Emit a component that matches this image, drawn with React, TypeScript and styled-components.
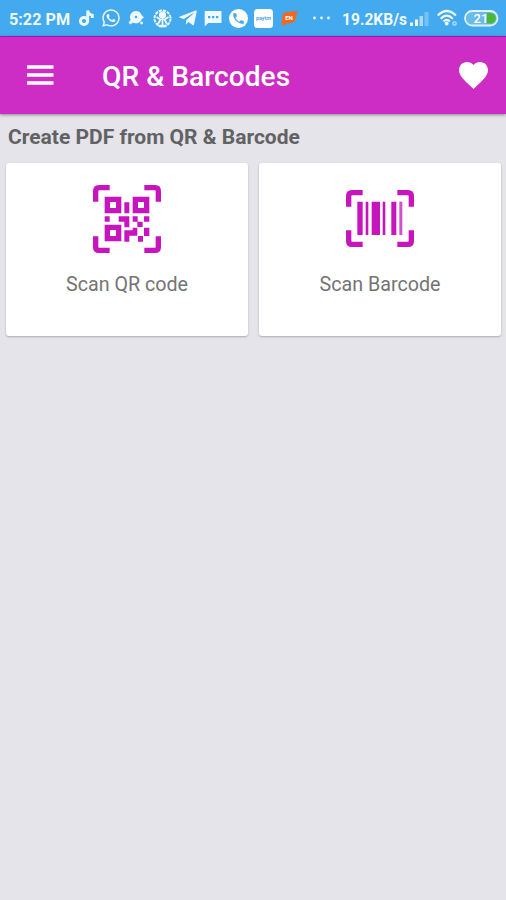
import React from "react";
import styled, { createGlobalStyle } from "styled-components";
import { FaWhatsapp, FaTelegramPlane } from "react-icons/fa";

const GlobalStyle = createGlobalStyle`
  * { box-sizing: border-box; }
  body { margin: 0; background: #e5e4ea; font-family: Roboto, "Noto Sans", sans-serif; }
`;

const Screen = styled.div`
  width: 506px;
  height: 900px;
  display: flex;
  flex-direction: column;
  background: #e5e4ea;
  overflow: hidden;
`;

const StatusBar = styled.div`
  height: 36px;
  flex: none;
  display: flex;
  align-items: center;
  background: #43aaf0;
  color: #eef8ff;
`;

const StatusText = styled.span<{ $left: number; $width: number; $size: number }>`
  flex: none;
  margin-left: ${(p) => p.$left}px;
  width: ${(p) => p.$width}px;
  font-size: ${(p) => p.$size}px;
  font-weight: 700;
  line-height: 36px;
  padding-top: 3px;
  white-space: nowrap;
`;

const StatusIcon = styled.span<{ $left: number; $width: number }>`
  flex: none;
  display: flex;
  margin-left: ${(p) => p.$left}px;
  width: ${(p) => p.$width}px;
  svg { display: block; flex: none; }
`;

const AppBar = styled.header`
  height: 78px;
  flex: none;
  display: flex;
  align-items: center;
  background: #cd2dc4;
  border-top: 1px solid #a214b8;
  box-shadow: 0 1px 3px rgba(0, 0, 0, 0.4);
  z-index: 1;
`;

const IconButton = styled.button<{ $width: number; $pad: number }>`
  display: flex;
  flex: none;
  width: ${(p) => p.$width}px;
  padding: 0 0 0 ${(p) => p.$pad}px;
  border: 0;
  background: none;
  svg { display: block; flex: none; }
`;

const Title = styled.h1`
  flex: 1;
  margin: 0;
  padding-top: 2px;
  color: #fff;
  font-size: 28.2px;
  font-weight: 500;
  line-height: 36px;
  white-space: nowrap;
`;

const SectionTitle = styled.h2`
  margin: 0;
  padding: 9px 0 0 8px;
  height: 49px;
  flex: none;
  color: #626264;
  font-size: 21px;
  font-weight: 700;
  line-height: 28px;
  white-space: nowrap;
`;

const CardGrid = styled.div`
  display: grid;
  grid-template-columns: 242px 242px;
  column-gap: 11px;
  padding-left: 6px;
`;

const Card = styled.div`
  height: 173px;
  display: flex;
  flex-direction: column;
  align-items: center;
  background: #fff;
  border-radius: 3px;
  box-shadow: 0 1px 2px rgba(0, 0, 0, 0.25);
`;

const CardIcon = styled.div`
  height: 111px;
  display: flex;
  align-items: center;
  svg { display: block; }
`;

const CardLabel = styled.div`
  color: #747474;
  font-size: 19.7px;
  line-height: 24px;
  height: 24px;
  margin-top: -1px;
  white-space: nowrap;
`;

const NoteIcon = () => (
  <svg width="16" height="18" viewBox="0 0 16 18" fill="none" stroke="currentColor">
    <circle cx="6" cy="12" r="3.6" strokeWidth="3" />
    <path d="M9.700 12V1.500C10.200 4 12 5.900 14.300 6.200V9" strokeWidth="2.800" />
  </svg>
);

const GearIcon = () => (
  <svg width="17" height="18" viewBox="0 0 17 18" fill="currentColor">
    <path fillRule="evenodd" d="M8 2a6 6 0 0 1 5.600 4L16 8.500 13.800 10A6 6 0 0 1 5 13.500L2.500 15.500.5 13.500 2.600 11A6 6 0 0 1 8 2Zm0 4.700a1.300 1.300 0 1 0 0 2.600 1.300 1.300 0 0 0 0-2.600Z" />
    <circle cx="13.600" cy="14" r="1.400" />
  </svg>
);

const GlobeIcon = () => (
  <svg width="19" height="19" viewBox="0 0 19 19">
    <circle cx="9.500" cy="9.500" r="8" fill="none" stroke="currentColor" strokeWidth="2" strokeDasharray="3.200 1" />
    <circle cx="9.500" cy="6" r="3.600" fill="currentColor" />
    <path d="M9.500 5v12M3.500 8l4 2.500L5 15M15.500 8l-4 2.500L14 15" fill="none" stroke="currentColor" strokeWidth="1.800" />
    <path d="M5.500 17h8" stroke="currentColor" strokeWidth="2.400" />
  </svg>
);

const ChatIcon = () => (
  <svg width="18" height="17" viewBox="0 0 18 17">
    <path d="M1 1h16.500v12H4.200L.7 16.500V1Z" fill="currentColor" />
    <path d="M4 6h2.300v2.300H4zM8 6h2.300v2.300H8zM12 6h2.300v2.300H12z" fill="#43aaf0" />
  </svg>
);

const PhoneIcon = () => (
  <svg width="19" height="19" viewBox="0 0 24 24">
    <circle cx="12" cy="12" r="12" fill="#fff" />
    <path
      transform="translate(3 3) scale(.75)"
      d="M6.600 10.800c1.400 2.800 3.800 5.100 6.600 6.600l2.200-2.200c.3-.3.7-.4 1-.2 1.100.4 2.300.6 3.600.6.6 0 1 .4 1 1V20c0 .6-.4 1-1 1C10.600 21 3 13.400 3 4c0-.6.5-1 1-1h3.500c.6 0 1 .4 1 1 0 1.300.2 2.500.6 3.600.1.400 0 .7-.2 1z"
      fill="#43aaf0"
    />
  </svg>
);

const WalletIcon = () => (
  <svg width="19" height="19" viewBox="0 0 19 19">
    <rect width="19" height="19" rx="3.500" fill="#fff" />
    <text x="9.500" y="10.700" textAnchor="middle" textLength="15" fontFamily="Roboto, sans-serif" fontWeight="700" fontSize="5.500" fill="#58a9df">paytm</text>
  </svg>
);

const OrangeIcon = () => (
  <svg width="17" height="17" viewBox="0 0 17 17">
    <path d="M.8 10Q.8 2.500 6 2L16.500 1Q15.500 4 15 7.500 14 13 9 13.300L6 13.500 1.500 16Q.6 14 .8 10Z" fill="#f3681f" />
    <text x="8" y="9.800" textAnchor="middle" fontFamily="Roboto, sans-serif" fontWeight="700" fontSize="6" fill="#fff">EN</text>
  </svg>
);

const DotsIcon = () => (
  <svg width="20" height="4" viewBox="0 0 20 4" fill="currentColor">
    <circle cx="2.500" cy="2" r="1.400" /><circle cx="9.500" cy="2" r="1.400" /><circle cx="16.500" cy="2" r="1.400" />
  </svg>
);

const SignalIcon = () => (
  <svg width="19" height="15" viewBox="0 0 19 15" fill="currentColor">
    <path d="M0 11.500h3V15H0zM5 8.500h3V15H5z" />
    <path d="M9.500 5h3.500v10H9.500z" opacity=".6" />
    <path d="M14.500 1h4v14h-4z" opacity=".3" />
  </svg>
);

const WifiIcon = () => (
  <svg width="21" height="18" viewBox="0 0 21 18" fill="none" stroke="currentColor">
    <path d="M.8 6.500Q9.700-2.500 18.900 6.500M3.700 9.700Q9.700 3.700 15.800 9.700M6.500 12.500Q9.700 9.300 12.800 12.500" strokeWidth="2.200" />
    <circle cx="9.700" cy="14.500" r="1.900" fill="currentColor" stroke="none" />
    <circle cx="17.500" cy="14.500" r="1.700" strokeWidth="1.300" opacity=".7" />
  </svg>
);

const BatteryIcon = () => (
  <svg width="35" height="17" viewBox="0 0 35 17">
    <rect x="1" y="1" width="32.500" height="14.500" rx="7.250" fill="#6abbe9" stroke="#dff2fc" strokeWidth="1.800" />
    <path d="M23 3h3.500a5.300 5.300 0 0 1 0 10.600H23Z" fill="#49b92f" />
    <text x="17" y="13" textAnchor="middle" fontFamily="Roboto, sans-serif" fontWeight="500" fontSize="13" fill="#fff">21</text>
  </svg>
);

const MenuIcon = () => (
  <svg width="27" height="21" viewBox="0 0 27 21" fill="#fff">
    <path d="M0 .3h26.500v3.400H0zM0 8.300h26.500v3.400H0zM0 16.300h26.500v3.400H0z" />
  </svg>
);

const HeartIcon = () => (
  <svg width="29" height="27" viewBox="2 3 20 18.350" preserveAspectRatio="none">
    <path fill="#fff" d="m12 21.350-1.450-1.320C5.400 15.360 2 12.280 2 8.500 2 5.420 4.420 3 7.500 3c1.740 0 3.410.81 4.500 2.090C13.090 3.810 14.760 3 16.500 3 19.580 3 22 5.420 22 8.500c0 3.780-3.400 6.860-8.550 11.540L12 21.350z" />
  </svg>
);

const QrIcon = () => (
  <svg width="68" height="68" viewBox="0 0 204 204">
    <g fill="none" stroke="#c615bd" strokeWidth="16">
      <path d="M8 50V18Q8 8 18 8H50M154 8h32q10 0 10 10v32M8 154v32q0 10 10 10h32M154 196h32q10 0 10-10v-32" />
      <path d="M43 43h34v34H43zM127 43h34v34h-34zM43 127h34v34H43z" />
    </g>
    <path
      fill="#c615bd"
      d="M94 52h15v33H94zM35 94h15v16H35zM77 94h32v33H94v-17H77zM119 94h15v16h15v15h-15v-15h-15zM153 94h16v16h-16zM94 136h25v-8h14v24h-24v18H94zM133 110h16v16h-16zM153 128h16v25h-16zM135 153h15v17h-15z"
    />
  </svg>
);

const BarcodeIcon = () => (
  <svg width="68" height="57" viewBox="0 0 204 171">
    <path fill="none" stroke="#c615bd" strokeWidth="16" d="M8 50V18Q8 8 18 8H50M154 8h32q10 0 10 10v32M8 121v32q0 10 10 10h32M154 163h32q10 0 10-10v-32" />
    <path fill="#c615bd" d="M34 35h16v100H34zM59 35h8v100h-8zM77 35h25v100H77zM110 35h8v100h-8zM136 35h15v100h-15z" />
    <path fill="#c615bd" opacity=".75" d="M160 35h9v100h-9z" />
  </svg>
);

export default function App() {
  return (
    <Screen>
      <GlobalStyle />
      <StatusBar>
        <StatusText $left={9} $width={61} $size={16.2}>5:22 PM</StatusText>
        <StatusIcon $left={8} $width={16}><NoteIcon /></StatusIcon>
        <StatusIcon $left={7} $width={20}><FaWhatsapp size={20} /></StatusIcon>
        <StatusIcon $left={7} $width={17}><GearIcon /></StatusIcon>
        <StatusIcon $left={8} $width={19}><GlobeIcon /></StatusIcon>
        <StatusIcon $left={6} $width={20}><FaTelegramPlane size={20} /></StatusIcon>
        <StatusIcon $left={6} $width={18}><ChatIcon /></StatusIcon>
        <StatusIcon $left={7} $width={19}><PhoneIcon /></StatusIcon>
        <StatusIcon $left={6} $width={19}><WalletIcon /></StatusIcon>
        <StatusIcon $left={8} $width={17}><OrangeIcon /></StatusIcon>
        <StatusIcon $left={14} $width={20}><DotsIcon /></StatusIcon>
        <StatusText $left={10} $width={65} $size={15.6}>19.2KB/s</StatusText>
        <StatusIcon $left={3} $width={19}><SignalIcon /></StatusIcon>
        <StatusIcon $left={8} $width={21}><WifiIcon /></StatusIcon>
        <StatusIcon $left={6} $width={35}><BatteryIcon /></StatusIcon>
      </StatusBar>
      <AppBar>
        <IconButton $width={102} $pad={27} aria-label="Menu"><MenuIcon /></IconButton>
        <Title>QR &amp; Barcodes</Title>
        <IconButton $width={47} $pad={0} aria-label="Favorite"><HeartIcon /></IconButton>
      </AppBar>
      <SectionTitle>Create PDF from QR &amp; Barcode</SectionTitle>
      <CardGrid>
        <Card>
          <CardIcon><QrIcon /></CardIcon>
          <CardLabel>Scan QR code</CardLabel>
        </Card>
        <Card>
          <CardIcon><BarcodeIcon /></CardIcon>
          <CardLabel>Scan Barcode</CardLabel>
        </Card>
      </CardGrid>
    </Screen>
  );
}
